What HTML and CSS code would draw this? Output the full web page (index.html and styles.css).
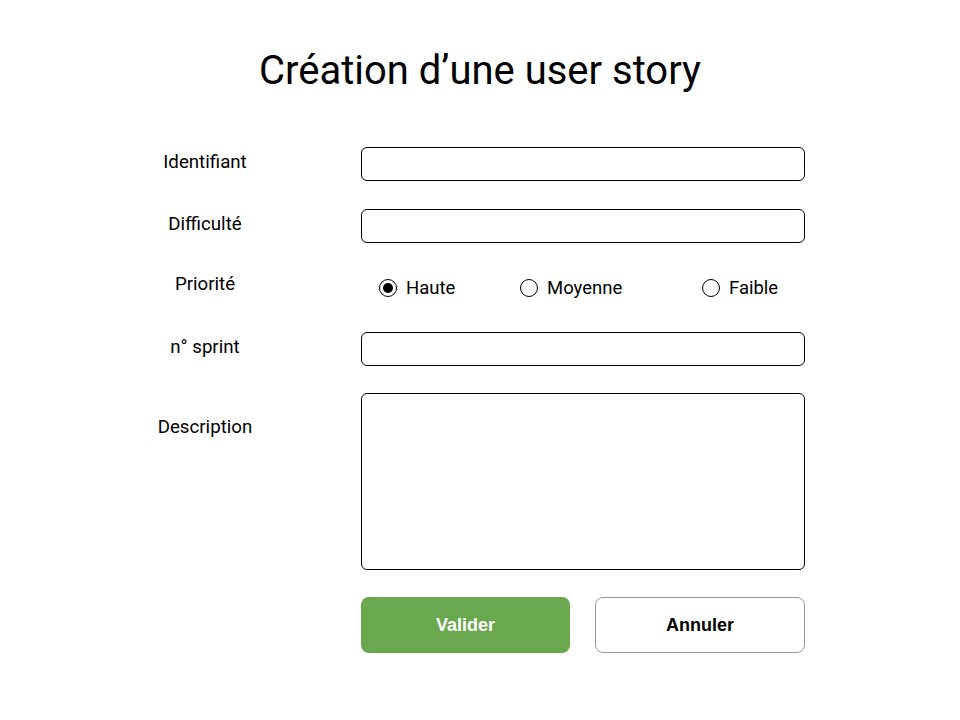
FILE: index.html
```html
<!DOCTYPE html>
<html lang="fr">
<head>
<meta charset="utf-8">
<title>Création d’une user story</title>
<link rel="stylesheet" href="styles.css">
</head>
<body>
<main class="page">
  <h1 class="title">Création d’une user story</h1>
  <form class="form">
    <label class="label" for="ident">Identifiant</label>
    <input class="field" id="ident" type="text">

    <label class="label" for="diff">Difficulté</label>
    <input class="field" id="diff" type="text">

    <span class="label label-radio">Priorité</span>
    <div class="radios">
      <label class="radio"><input type="radio" name="prio" checked><span>Haute</span></label>
      <label class="radio"><input type="radio" name="prio"><span>Moyenne</span></label>
      <label class="radio"><input type="radio" name="prio"><span>Faible</span></label>
    </div>

    <label class="label" for="sprint">n° sprint</label>
    <input class="field" id="sprint" type="text">

    <label class="label label-desc" for="desc">Description</label>
    <textarea class="field area" id="desc"></textarea>

    <span></span>
    <div class="actions">
      <button type="button" class="btn btn-ok">Valider</button>
      <button type="button" class="btn btn-cancel">Annuler</button>
    </div>
  </form>
</main>
</body>
</html>
```
FILE: styles.css
```css
* { box-sizing: border-box; }
html, body {
  margin: 0;
  padding: 0;
  background: #fff;
}
body {
  font-family: Roboto, "Liberation Sans", sans-serif;
  color: #000;
}
.page {
  width: 960px;
  padding-top: 47px;
}
.title {
  margin: 0;
  text-align: center;
  font-size: 40px;
  font-weight: 400;
  line-height: 47px;
}
.form {
  margin: 53px 0 0 130px;
  display: grid;
  grid-template-columns: 150px 444px;
  column-gap: 81px;
  row-gap: 28px;
}
.label {
  font-size: 18.7px;
  line-height: 22px;
  text-align: center;
  padding-top: 4px;
}
.label-radio { padding-top: 2px; }
.label-desc { padding-top: 22px; }
.field {
  display: block;
  width: 444px;
  height: 34px;
  border: 1px solid #000;
  border-radius: 6px;
  background: #fff;
  font: inherit;
  margin: 0;
  padding: 0 8px;
}
.area {
  height: 177px;
  margin-top: -1px;
  resize: none;
}
.radios {
  height: 33px;
  display: grid;
  grid-template-columns: 141px 182px auto;
  align-items: center;
  padding-left: 18px;
}
.radio {
  display: flex;
  align-items: center;
  gap: 9px;
  font-size: 18.5px;
  line-height: 22px;
}
.radio input {
  appearance: none;
  -webkit-appearance: none;
  margin: 0;
  width: 18px;
  height: 18px;
  border: 1.3px solid #000;
  border-radius: 50%;
  background: #fff;
  display: grid;
  place-items: center;
}
.radio input:checked::after {
  content: "";
  width: 10px;
  height: 10px;
  border-radius: 50%;
  background: #000;
}
.actions {
  display: flex;
  gap: 25px;
  margin-top: -1px;
}
.btn {
  width: 209px;
  height: 56px;
  border-radius: 8px;
  font-family: "Liberation Sans", Arial, sans-serif;
  font-size: 18px;
  font-weight: 700;
  cursor: pointer;
}
.btn-ok {
  background: #6aa84f;
  color: #fff;
  border: none;
}
.btn-cancel {
  width: 210px;
  background: #fff;
  color: #000;
  border: 1px solid #999;
}
```
